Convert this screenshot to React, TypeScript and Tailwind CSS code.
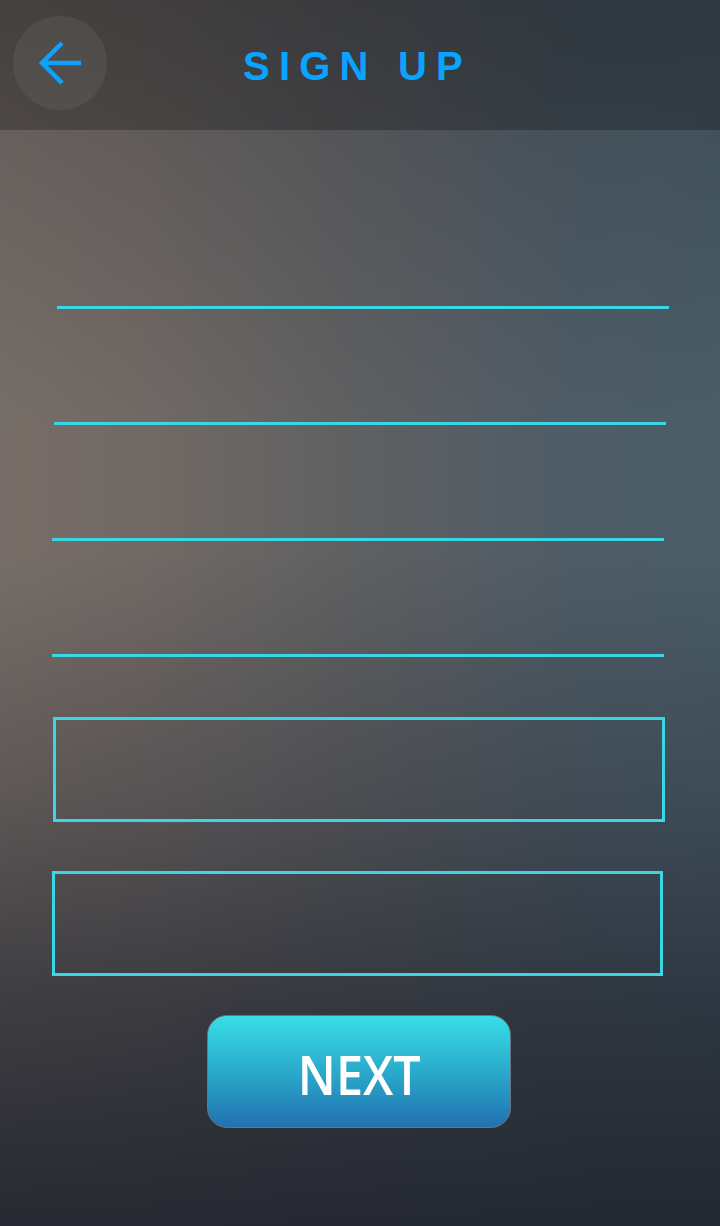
import React from 'react';

const BackArrow = () => (
  <svg width="48" height="48" viewBox="0 0 48 48" fill="none">
    <path d="M45 24H6M26 4L6 24L26 44" stroke="#0aa3ff" strokeWidth="4.5" strokeLinecap="butt" strokeLinejoin="miter" />
  </svg>
);

const Line = ({ className }: { className: string }) => (
  <div className={`h-[3px] bg-[#3ad6e4] ${className}`} />
);

const App = () => {
  return (
    <div className="relative w-[720px] h-[1226px] overflow-hidden bg-[linear-gradient(180deg,rgba(30,34,44,0.3)_0%,rgba(30,34,44,0.18)_12%,rgba(30,34,44,0)_35%,rgba(30,34,44,0)_45%,rgba(30,34,44,0.3)_65%,rgba(30,34,44,0.65)_82%,rgba(30,34,44,0.9)_100%),linear-gradient(90deg,#786e68_0%,#716965_20%,#5f6062_50%,#4e5c66_80%,#4a5d68_100%)] font-['Liberation_Sans',sans-serif]">
      <header className="h-[130px] bg-black/25 flex items-center">
        <button className="ml-[13px] mt-[-4px] w-[94px] h-[94px] rounded-full bg-white/[0.06] flex items-center justify-center">
          <BackArrow />
        </button>
        <h1 className="ml-[136px] mt-[2px] text-[40px] font-bold tracking-[0.23em] text-[#0aa3ff] leading-none">
          SIGN UP
        </h1>
      </header>

      <div className="flex flex-col">
        <Line className="mt-[176px] ml-[57px] w-[612px]" />
        <Line className="mt-[113px] ml-[54px] w-[612px]" />
        <Line className="mt-[113px] ml-[52px] w-[612px]" />
        <Line className="mt-[113px] ml-[52px] w-[612px]" />
        <div className="mt-[60px] ml-[53px] w-[612px] h-[105px] border-[3px] border-[#3ad6e4]" />
        <div className="mt-[49px] ml-[52px] w-[611px] h-[105px] border-[3px] border-[#3ad6e4]" />
        <div className="mt-[39px] flex justify-center">
          <button className="ml-[-2px] w-[304px] h-[113px] rounded-[20px] border border-[#687584] bg-[linear-gradient(180deg,#38dee7_0%,#2aaacb_50%,#2271b0_100%)] flex items-center justify-center">
            <span className="inline-block scale-x-[0.9] font-['Open_Sans',sans-serif] font-semibold text-[54px] text-white leading-none mt-[4px]">
              NEXT
            </span>
          </button>
        </div>
      </div>
    </div>
  );
};

export default App;
